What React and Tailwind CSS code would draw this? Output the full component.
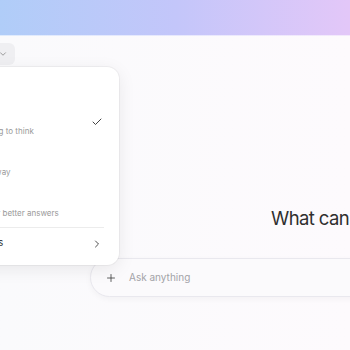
import React from 'react';
import { Check, ChevronDown, ChevronRight, Plus } from 'lucide-react';

const models = [
    { name: 'Auto', desc: 'Decides how long to think', active: true },
    { name: 'Instant', desc: 'Answers right away' },
    { name: 'Thinking', desc: 'Thinks longer for better answers' },
];

const ModelMenu = () => (
    <div className="absolute top-[67px] left-[-77px] w-[196px] h-[198px] rounded-[12px] bg-white shadow-[0_4px_18px_rgba(0,0,0,0.08)] ring-1 ring-black/[0.04] z-20 flex flex-col">
        {/* Header */}
        <div className="h-[34px] pt-[12px] pl-[13px] text-[9px] text-[#8a8a8a]">ChatGPT 5</div>

        {/* Model rows */}
        {models.map((m) => (
            <div key={m.name} className="h-[41px] flex items-center justify-between pl-[13px] pr-[16px]">
                <div className="flex flex-col">
                    <span className="text-[9.4px] leading-[14px] text-[#262626]">{m.name}</span>
                    <span className="mt-[4px] text-[8px] leading-[12px] text-[#9a9a9a] whitespace-nowrap">{m.desc}</span>
                </div>
                {m.active && <Check size={12} strokeWidth={1.8} className="text-[#2e2e2e]" />}
            </div>
        ))}

        {/* Divider */}
        <div className="mt-[3px] ml-[14px] mr-[15px] h-px bg-[#ececec]" />

        {/* Legacy */}
        <div className="h-[31px] flex items-center justify-between pl-[13px] pr-[16px]">
            <span className="text-[9.4px] text-[#262626]">Legacy models</span>
            <ChevronRight size={12} strokeWidth={1.8} className="text-[#3a3a3a]" />
        </div>
    </div>
);

export default function App() {
    return (
        <div className="relative w-[350px] h-[350px] overflow-hidden bg-linear-to-r from-[#fafafc] to-[#fdfafd] font-['Inter','Liberation_Sans',sans-serif]">
            {/* Top gradient band */}
            <div className="h-[36px] bg-linear-to-r from-[#b0cdf8] via-[#c3c6fa] to-[#e3c7f8] border-b border-white/60" />

            {/* Model switcher button */}
            <div className="pt-[7px] flex">
                <button className="ml-[-10px] h-[22px] w-[25px] rounded-[6px] bg-[#efeff2] flex items-center justify-end pr-[7px]">
                    <ChevronDown size={10} strokeWidth={2} className="text-[#8a8a8a]" />
                </button>
            </div>

            {/* Heading */}
            <h1 className="mt-[141px] pl-[271px] whitespace-nowrap text-[18.5px] tracking-[-0.6px] leading-[24px] text-[#2f2f2f]">
                What can I help with?
            </h1>

            {/* Prompt bar */}
            <div className="mt-[28px] ml-[90px] w-[420px] h-[39px] rounded-[20px] bg-[#fbfafc] border border-[#e9e8ee] shadow-[0_2px_6px_rgba(0,0,0,0.04)] flex items-center pl-[14px] gap-[12px]">
                <Plus size={12} strokeWidth={1.6} className="text-[#3a3a3a]" />
                <span className="text-[10px] text-[#a3a3a8]">Ask anything</span>
            </div>

            <ModelMenu />
        </div>
    );
}
